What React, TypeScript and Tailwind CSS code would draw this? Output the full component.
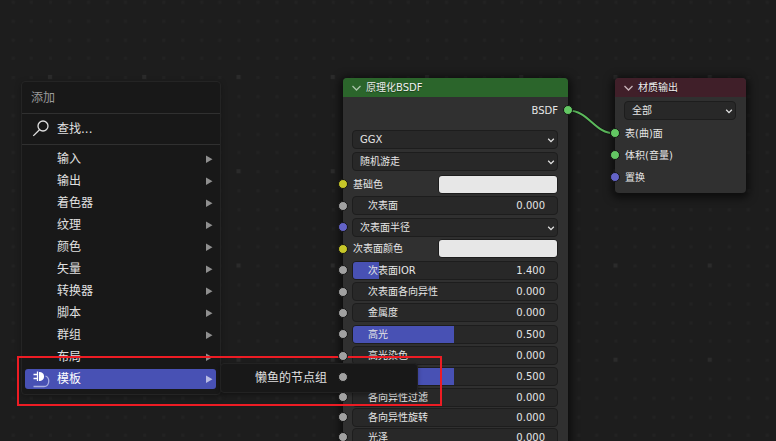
import { useState } from "react";
import type { ReactNode } from "react";

const FONT = "font-['DejaVu_Sans','Noto_Sans_CJK_SC',sans-serif]";

const SOCKET_COLORS = {
  yellow: "bg-[#c7c729]",
  gray: "bg-[#a1a1a1]",
  violet: "bg-[#6363c7]",
  green: "bg-[#63c763]",
};

type SocketColor = keyof typeof SOCKET_COLORS;

function Socket({ color, side = "left" }: { color: SocketColor; side?: "left" | "right" }) {
  return (
    <span
      className={`absolute top-1/2 z-10 box-content size-2 -translate-y-1/2 rounded-full border border-[#141414] ${
        side === "left" ? "-left-[5px]" : "-right-[5px]"
      } ${SOCKET_COLORS[color]}`}
    />
  );
}

function GridBackground() {
  const steps = [0, 1, 2, 3, 4];
  return (
    <svg className="absolute inset-0 size-full" aria-hidden="true">
      <defs>
        <pattern id="grid" x="41" y="68" width="94.25" height="94.25" patternUnits="userSpaceOnUse">
          {steps.map((r) =>
            steps.map((c) => (
              <rect
                key={`${r}-${c}`}
                x={Math.round(8 + c * 18.85)}
                y={Math.round(8 + r * 18.85)}
                width="3"
                height="3"
                fill="#222222"
              />
            )),
          )}
          <rect x="7" y="7" width="4" height="4" fill="#2b2b2b" />
        </pattern>
      </defs>
      <rect width="100%" height="100%" fill="url(#grid)" />
    </svg>
  );
}

function NodeHeader({ title, tone, chevron }: { title: string; tone: string; chevron: string }) {
  return (
    <header className={`flex h-[19px] items-center gap-1 rounded-t px-2 text-[#eeeeee] ${tone}`}>
      <svg width="11" height="10" viewBox="0 0 11 10" fill="none" stroke={chevron} strokeWidth="1.3" aria-hidden="true">
        <path d="M1.500 3 5.500 7 9.500 3" />
      </svg>
      <h2 className="[text-shadow:0_1px_1px_#0006]">{title}</h2>
    </header>
  );
}

function Dropdown({ label, options }: { label: string; options: string[] }) {
  return (
    <div className="relative w-full">
      <select
        aria-label={label}
        className="block h-[19px] w-full appearance-none rounded border border-[#1d1d1d] bg-[#282828] pl-[7px] text-[#e5e5e5] outline-none"
      >
        {options.map((o) => (
          <option key={o}>{o}</option>
        ))}
      </select>
      <svg
        className="pointer-events-none absolute top-1.5 right-[3px]"
        width="8"
        height="8"
        viewBox="0 0 8 8"
        fill="none"
        stroke="#e0e0e0"
        strokeWidth="1.3"
        aria-hidden="true"
      >
        <path d="M1.200 2.800 4 5.600 6.800 2.800" />
      </svg>
    </div>
  );
}

function NumberSlider({ label, initial, fill }: { label: string; initial: number; fill: number }) {
  const [value, setValue] = useState(initial);
  const max = fill > 0 ? initial / fill : 1;
  return (
    <label className="relative flex h-[19px] w-full items-center justify-between overflow-hidden rounded border border-[#1d1d1d] bg-[#282828] pr-3 pl-[15px] text-[#e5e5e5]">
      <span className="absolute inset-y-0 left-0 bg-[#4851b4]" style={{ width: `${(value / max) * 100}%` }} />
      <span className="relative">{label}</span>
      <span className="relative">{value.toFixed(3)}</span>
      <input
        type="range"
        min="0"
        max={max}
        step="0.001"
        value={value}
        onChange={(e) => setValue(Number(e.target.value))}
        className="absolute inset-0 size-full opacity-0"
      />
    </label>
  );
}

function ColorField({ label }: { label: string }) {
  return (
    <label className="flex w-full items-center justify-between pl-px text-[#e5e5e5]">
      {label}
      <input
        type="color"
        defaultValue="#e7e7e7"
        className="block h-[19px] w-[120px] appearance-none overflow-hidden rounded border border-[#1d1d1d] bg-[#e7e7e7] p-0 [&::-webkit-color-swatch]:border-0 [&::-webkit-color-swatch-wrapper]:p-0"
      />
    </label>
  );
}

function Row({ socket, height, children }: { socket?: SocketColor; height: string; children: ReactNode }) {
  return (
    <div className={`relative flex items-center pr-2.5 pl-[9px] ${height}`}>
      {socket && <Socket color={socket} />}
      {children}
    </div>
  );
}

const SHADER_SLIDERS = [
  { label: "次表面IOR", value: 1.4, fill: 0.128, height: "h-[22px]" },
  { label: "次表面各向异性", value: 0, fill: 0, height: "h-[21px]" },
  { label: "金属度", value: 0, fill: 0, height: "h-[21px]" },
  { label: "高光", value: 0.5, fill: 0.496, height: "h-[22px]" },
  { label: "高光染色", value: 0, fill: 0, height: "h-[21px]" },
  { label: "糙度", value: 0.5, fill: 0.496, height: "h-[21px]" },
  { label: "各向异性过滤", value: 0, fill: 0, height: "h-[20px]" },
  { label: "各向异性旋转", value: 0, fill: 0, height: "h-[20px]" },
  { label: "光泽", value: 0, fill: 0, height: "h-[20px]" },
];

function ShaderNode() {
  return (
    <section className="absolute top-[78px] left-[343px] w-[225px] rounded bg-[#303030] shadow-[0_2px_8px_3px_#0009]">
      <NodeHeader title="原理化BSDF" tone="bg-[#2b652b]" chevron="#a9c4a9" />
      <div className="relative mt-px flex h-6 items-center justify-end pr-2.5 text-[#e5e5e5]">
        BSDF
        <Socket color="green" side="right" />
      </div>
      <div className="pt-1.5">
        <Row height="h-[22px]">
          <Dropdown label="分布" options={["GGX", "多重散射GGX"]} />
        </Row>
        <Row height="h-[23px]">
          <Dropdown label="次表面方法" options={["随机游走", "克里斯坦森-伯利"]} />
        </Row>
        <Row height="h-[22px]" socket="yellow">
          <ColorField label="基础色" />
        </Row>
        <Row height="h-[21px]" socket="gray">
          <NumberSlider label="次表面" initial={0} fill={0} />
        </Row>
        <Row height="h-[22px]" socket="violet">
          <Dropdown label="半径" options={["次表面半径"]} />
        </Row>
        <Row height="h-[21px]" socket="yellow">
          <ColorField label="次表面颜色" />
        </Row>
        {SHADER_SLIDERS.map((s) => (
          <Row key={s.label} height={s.height} socket="gray">
            <NumberSlider label={s.label} initial={s.value} fill={s.fill} />
          </Row>
        ))}
      </div>
    </section>
  );
}

const OUTPUT_SOCKETS: { label: string; color: SocketColor }[] = [
  { label: "表(曲)面", color: "green" },
  { label: "体积(音量)", color: "green" },
  { label: "置换", color: "violet" },
];

function OutputNode() {
  return (
    <section className="absolute top-[78px] left-[615px] w-[131px] rounded bg-[#303030] pb-[5px] shadow-[0_2px_8px_3px_#0009]">
      <NodeHeader title="材质输出" tone="bg-[#401f29]" chevron="#c9b5bb" />
      <div className="pt-1 pr-2.5 pb-0.5 pl-[9px]">
        <Dropdown label="目标" options={["全部", "Eevee", "Cycles"]} />
      </div>
      <ul>
        {OUTPUT_SOCKETS.map((s) => (
          <li key={s.label} className="relative flex h-[22px] items-center pl-2.5 text-[#e5e5e5]">
            <Socket color={s.color} />
            {s.label}
          </li>
        ))}
      </ul>
    </section>
  );
}

function NodeLink() {
  return (
    <svg className="absolute top-[100px] left-[560px]" width="64" height="44" viewBox="0 0 64 44" fill="none" aria-hidden="true">
      <path d="M8 10.500C29 10.500 34 33.500 55 33.500" stroke="#141414" strokeWidth="3.500" />
      <path d="M8 10.500C29 10.500 34 33.500 55 33.500" stroke="#5cba5c" strokeWidth="2" />
    </svg>
  );
}

function SearchIcon() {
  return (
    <svg width="18" height="18" viewBox="0 0 18 18" fill="none" stroke="#e0e0e0" strokeWidth="1.300" aria-hidden="true">
      <circle cx="11" cy="6" r="5" />
      <path d="M7.500 9.700 1.300 15.900" />
    </svg>
  );
}

function PlugIcon() {
  return (
    <svg width="18" height="18" viewBox="0 0 18 18" fill="none" aria-hidden="true">
      <path d="M1.500 4.500H5.500M1.500 8.500H5.500M5.500 1.500V11" stroke="#ffffff" strokeWidth="1.300" />
      <path d="M7 2H8C13.400 2 13.400 11 8 11H7Z" fill="#ffffff" />
      <path d="M13.500 6C18.500 8 17.500 16.500 12 16.500H1.500" stroke="#a9aee0" strokeWidth="1.300" />
    </svg>
  );
}

const MENU_ITEMS = ["输入", "输出", "着色器", "纹理", "颜色", "矢量", "转换器", "脚本", "群组", "布局", "模板"];

function AddMenu() {
  return (
    <nav
      aria-label="添加"
      className="absolute top-[81px] left-[21px] w-[200px] rounded border border-[#242424] bg-[#181818] pb-1 text-xs shadow-[0_2px_6px_#0004]"
    >
      <h1 className="flex h-[31px] items-center px-[9px] text-[#9a9a9a]">添加</h1>
      <button
        type="button"
        className="flex h-8 w-full items-center gap-[7px] border-y border-[#303030] pl-2.5 text-[#e0e0e0]"
      >
        <SearchIcon />
        查找...
      </button>
      <ul className="pt-[3px] pr-1 pl-[3px]">
        {MENU_ITEMS.map((item) => {
          const active = item === "模板";
          return (
            <li key={item} className="flex h-[22px] items-center">
              <button
                type="button"
                className={`flex h-5 w-full items-center gap-[7px] rounded-[3px] pr-[3px] pl-[7px] ${
                  active ? "bg-[#4851b4] text-white" : "text-[#e0e0e0]"
                }`}
              >
                <span className="size-[18px]">{active && <PlugIcon />}</span>
                <span className="grow text-left">{item}</span>
                <svg width="7" height="8" viewBox="0 0 7 8" fill={active ? "#b9bce4" : "#8f8f8f"} aria-hidden="true">
                  <path d="M0 .5 6.500 4.250 0 8Z" />
                </svg>
              </button>
            </li>
          );
        })}
      </ul>
    </nav>
  );
}

function SubMenu() {
  return (
    <div className="absolute top-[363px] left-[220px] w-[198px] rounded border border-[#222222] bg-[#181818] text-xs shadow-[0_2px_4px_#0005]">
      <button type="button" className="flex h-7 w-full items-center pl-[34px] text-[#e0e0e0]">
        懒鱼的节点组
      </button>
    </div>
  );
}

export default function App() {
  return (
    <main lang="zh-CN" className={`relative h-screen w-full overflow-hidden bg-[#1d1d1d] text-[10px] ${FONT}`}>
      <GridBackground />
      <NodeLink />
      <ShaderNode />
      <OutputNode />
      <AddMenu />
      <SubMenu />
      <div className="pointer-events-none absolute top-[356px] left-[17px] h-[50px] w-[425px] border-2 border-[#ed1c24]" />
    </main>
  );
}
